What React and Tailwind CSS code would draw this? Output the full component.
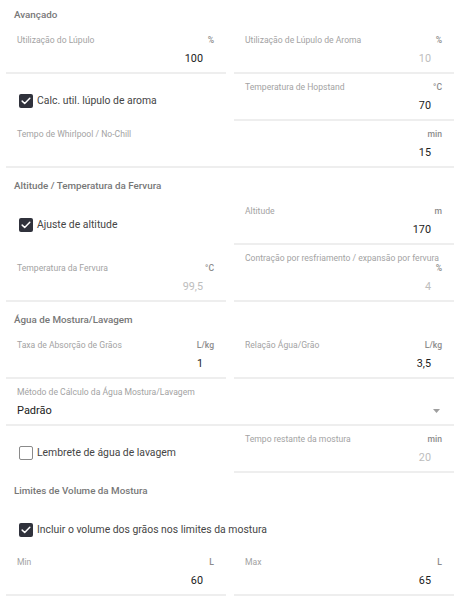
import React from "react";

function Check({ checked }) {
  if (checked) {
    return (
      <span className="flex h-[14px] w-[14px] shrink-0 items-center justify-center rounded-[2px] bg-[#30323c]">
        <svg width="10" height="8" viewBox="0 0 10 8" fill="none">
          <path d="M1.2 4.1 3.7 6.5 8.8 1.3" stroke="#ffffff" strokeWidth="1.5" strokeLinecap="round" strokeLinejoin="round" />
        </svg>
      </span>
    );
  }
  return <span className="h-[14px] w-[14px] shrink-0 rounded-[2px] border-[1.5px] border-[#8a8a8a] bg-white" />;
}

function CheckRow({ label, checked, className = "" }) {
  return (
    <div className={`h-[47px] pl-[13px] pt-[20px] ${className}`}>
      <div className="flex items-center gap-[4px]">
        <Check checked={checked} />
        <span className="whitespace-nowrap text-[10.4px] leading-[14px] text-[#454545]">{label}</span>
      </div>
    </div>
  );
}

function Field({ label, unit, value, disabled, wrapUnit, className = "" }) {
  return (
    <div className={`flex flex-col justify-end border-b-2 border-[#eeeeee] ${className}`}>
      {wrapUnit ? (
        <div className="pl-[11px] pr-[12px] pt-[8px] text-[8.6px] leading-[10px]">
          <div className="whitespace-nowrap text-[#a3a3a3]">{label}</div>
          <div className="text-right font-medium text-[#8c8c8c]">{unit}</div>
        </div>
      ) : (
        <div className="flex justify-between pl-[11px] pr-[12px] pt-[8px] text-[8.6px] leading-[10px]">
          <span className="whitespace-nowrap text-[#a3a3a3]">{label}</span>
          <span className="font-medium text-[#8c8c8c]">{unit}</span>
        </div>
      )}
      <div
        className={`mt-[7px] pb-[6px] pr-[23px] text-right text-[10.8px] leading-[14px] ${
          disabled ? "text-[#bdbdbd]" : "text-[#212121]"
        }`}
      >
        {value}
      </div>
    </div>
  );
}

function SelectField({ label, value, className = "" }) {
  return (
    <div className={`flex flex-col justify-end border-b-2 border-[#eeeeee] ${className}`}>
      <div className="pl-[11px] pt-[8px] text-[8.6px] leading-[10px] text-[#a3a3a3]">{label}</div>
      <div className="mt-[7px] flex items-center justify-between pb-[6px] pl-[11px] pr-[14px]">
        <span className="text-[11px] leading-[14px] text-[#212121]">{value}</span>
        <svg width="7" height="4" viewBox="0 0 7 4">
          <path d="M0 0h7L3.5 4z" fill="#9e9e9e" />
        </svg>
      </div>
    </div>
  );
}

function Heading({ children, first }) {
  return (
    <div
      className={`${first ? "pt-[9px]" : "pt-[12px]"} pb-[6px] pl-[8px] text-[9.8px] font-medium leading-[12px] text-[#777777]`}
    >
      {children}
    </div>
  );
}

export default function App() {
  return (
    <div className="min-h-[600px] w-[468px] bg-white pl-[6px] font-['Roboto',_'Liberation_Sans',_sans-serif]">
      <Heading first>Avançado</Heading>
      <div className="grid grid-cols-[220px_220px] gap-x-2">
        <Field label="Utilização do Lúpulo" unit="%" value="100" />
        <Field label="Utilização de Lúpulo de Aroma" unit="%" value="10" disabled />
        <CheckRow label="Calc. util. lúpulo de aroma" checked />
        <Field label="Temperatura de Hopstand" unit="°C" value="70" />
        <Field className="col-span-2" label="Tempo de Whirlpool / No-Chill" unit="min" value="15" />
      </div>

      <Heading>Altitude / Temperatura da Fervura</Heading>
      <div className="grid grid-cols-[220px_220px] gap-x-2">
        <CheckRow label="Ajuste de altitude" checked />
        <Field label="Altitude" unit="m" value="170" />
        <Field label="Temperatura da Fervura" unit="°C" value="99,5" disabled />
        <Field
          label="Contração por resfriamento / expansão por fervura"
          unit="%"
          value="4"
          disabled
          wrapUnit
        />
      </div>

      <Heading>Água de Mostura/Lavagem</Heading>
      <div className="grid grid-cols-[220px_220px] gap-x-2">
        <Field label="Taxa de Absorção de Grãos" unit="L/kg" value="1" />
        <Field label="Relação Água/Grão" unit="L/kg" value="3,5" />
        <SelectField className="col-span-2" label="Método de Cálculo da Água Mostura/Lavagem" value="Padrão" />
        <CheckRow label="Lembrete de água de lavagem" />
        <Field label="Tempo restante da mostura" unit="min" value="20" disabled />
      </div>

      <Heading>Limites de Volume da Mostura</Heading>
      <div className="grid grid-cols-[220px_220px] gap-x-2">
        <CheckRow className="col-span-2 !h-[46px]" label="Incluir o volume dos grãos nos limites da mostura" checked />
        <Field label="Min" unit="L" value="60" />
        <Field label="Max" unit="L" value="65" />
      </div>
    </div>
  );
}
